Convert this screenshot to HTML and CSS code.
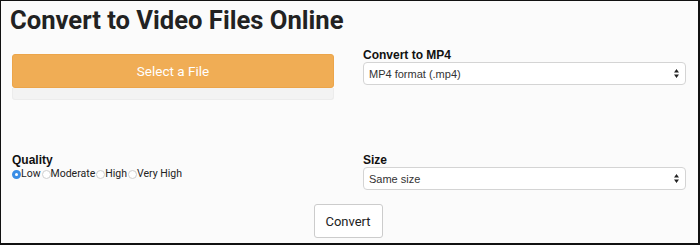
FILE: index.html
```html
<!DOCTYPE html>
<html lang="en">
<head>
  <meta charset="UTF-8" />
  <title>Convert to Video Files Online</title>
  <link rel="stylesheet" href="styles.css">
</head>
<body>
  <div class="page">
    <h1>Convert to Video Files Online</h1>

    <div class="row top">
      <div class="col">
        <button class="upload">Select a File</button>
        <div class="drop"></div>
      </div>
      <div class="col">
        <label class="field-label" for="format">Convert to MP4</label>
        <select id="format" class="picker">
          <option>MP4 format (.mp4)</option>
        </select>
      </div>
    </div>

    <div class="row bottom">
      <div class="col">
        <div class="field-label">Quality</div>
        <div class="radios">
          <label><input type="radio" name="q" checked>Low</label>
          <label><input type="radio" name="q">Moderate</label>
          <label><input type="radio" name="q">High</label>
          <label><input type="radio" name="q">Very High</label>
        </div>
      </div>
      <div class="col">
        <label class="field-label" for="size">Size</label>
        <select id="size" class="picker">
          <option>Same size</option>
        </select>
      </div>
    </div>

    <div class="actions">
      <button class="convert">Convert</button>
    </div>
  </div>
</body>
</html>
```

FILE: styles.css
```css
* { box-sizing: border-box; margin: 0; padding: 0; }

body {
  background: #fff;
}

.page {
  height: 245px;
  background: #fbfbfb;
  border-style: solid;
  border-color: #111;
  border-width: 1px 2px 2px 1px;
  padding: 4px 12px 0 11px;
}

h1 {
  font-family: Roboto, sans-serif;
  font-weight: 700;
  font-size: 25.6px;
  line-height: 30px;
  color: #222;
  margin-left: -2px;
}

.row {
  display: grid;
  grid-template-columns: 322px 323px;
  column-gap: 29px;
}

.top { margin-top: 14px; }
.bottom { margin-top: 54px; }

.col { display: flex; flex-direction: column; }

.upload {
  margin-top: 5px;
  height: 34px;
  background: #f0ad55;
  border: 1px solid #eca54a;
  border-radius: 3px;
  color: #fff;
  font-family: Roboto, sans-serif;
  font-size: 13.5px;
}

.drop {
  height: 12px;
  background: #f3f3f3;
  border: 1px solid #ececec;
  border-top: none;
  border-radius: 0 0 3px 3px;
}

.field-label {
  font-family: "Liberation Sans", Arial, sans-serif;
  font-weight: 700;
  font-size: 12px;
  line-height: 13px;
  color: #111;
}

.picker {
  -webkit-appearance: none;
  appearance: none;
  height: 23px;
  padding: 0 20px 0 5px;
  font-family: "Liberation Sans", Arial, sans-serif;
  font-size: 11px;
  color: #333;
  background: #fff url("data:image/svg+xml;utf8,<svg xmlns='http://www.w3.org/2000/svg' width='5' height='9'><path d='M2.5 0L5 3.5H0z M2.5 9L0 5.5H5z' fill='%23222'/></svg>") no-repeat right 6px center;
  border: 1px solid #d4d4d4;
  border-radius: 4px;
}

.radios {
  display: flex;
  align-items: center;
  font-family: Roboto, sans-serif;
  font-size: 10.5px;
  line-height: 14px;
  color: #222;
}

.radios label {
  display: flex;
  align-items: center;
  margin-right: 1px;
}

.radios input {
  -webkit-appearance: none;
  appearance: none;
  width: 9px;
  height: 9px;
  border: 1px solid #cfcfcf;
  border-radius: 50%;
  background: #fff;
}

.radios input:checked {
  border: 3px solid #3a8ee6;
}

.actions {
  display: flex;
  justify-content: center;
  margin-top: 14px;
}

.convert {
  width: 69px;
  height: 34px;
  background: #fff;
  border: 1px solid #ccc;
  border-radius: 3px;
  font-family: Roboto, sans-serif;
  font-size: 13px;
  color: #222;
  margin-left: -2px;
}
```
